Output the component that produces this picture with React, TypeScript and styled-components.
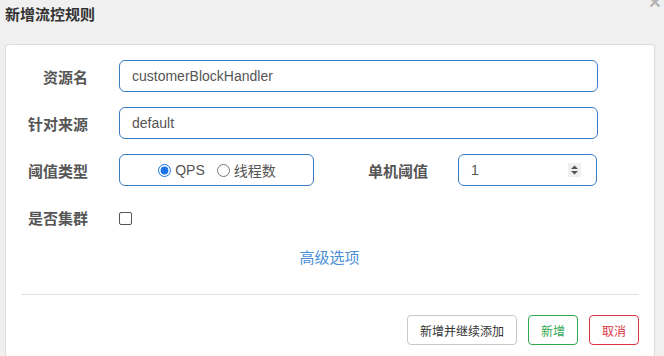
import React from "react";
import styled, { createGlobalStyle } from "styled-components";

const GlobalStyle = createGlobalStyle`
  html, body {
    margin: 0;
    padding: 0;
    background: #f0f0f0;
    font-family: "Liberation Sans", Arial, "Noto Sans CJK SC", sans-serif;
    overflow: hidden;
  }
`;

const Page = styled.div`
  width: 664px;
  height: 356px;
  padding-left: 5px;
  box-sizing: border-box;
`;

const Header = styled.div`
  display: flex;
  align-items: flex-start;
  justify-content: space-between;
  width: 650px;
  height: 44px;
`;

const Title = styled.h4`
  margin: 0;
  padding-top: 4px;
  font-size: 15px;
  line-height: 20px;
  font-weight: bold;
  color: #333;
  font-family: "Noto Sans CJK SC", sans-serif;
`;

const Close = styled.span`
  margin-top: -8px;
  margin-right: -6px;
  font-size: 21px;
  line-height: 20px;
  color: #b5b5b5;
  font-family: "Liberation Sans", Arial, sans-serif;
  font-weight: bold;
`;

const Panel = styled.div`
  width: 650px;
  height: 320px;
  box-sizing: border-box;
  background: #fff;
  border: 1px solid #dcdcdc;
  border-bottom: none;
  border-radius: 4px 4px 0 0;
  padding: 15px 15px 0;
`;

const Row = styled.div`
  display: flex;
  align-items: center;
  height: 32px;
  margin-bottom: 15px;
  padding-right: 41px;
`;

const Label = styled.label<{ $width?: number; $gap?: number }>`
  width: ${(p) => p.$width ?? 67}px;
  margin-right: ${(p) => p.$gap ?? 31}px;
  flex-shrink: 0;
  text-align: right;
  font-family: "Noto Sans CJK SC", sans-serif;
  font-size: 15px;
  font-weight: bold;
  color: #555;
  white-space: nowrap;
`;

const TextInput = styled.input`
  flex: 1;
  height: 32px;
  box-sizing: border-box;
  border: 1px solid #3a7cc2;
  border-radius: 6px;
  padding: 0 12px;
  font-family: "Liberation Sans", Arial, sans-serif;
  font-size: 14px;
  color: #555;
  outline: none;
`;

const RadioBox = styled.div`
  width: 195px;
  height: 32px;
  box-sizing: border-box;
  border: 1px solid #3a7cc2;
  border-radius: 6px;
  display: flex;
  align-items: center;
  justify-content: center;
  gap: 12px;
  padding-left: 1px;
  font-size: 14px;
  color: #555;
`;

const RadioLabel = styled.label`
  display: flex;
  align-items: center;
  gap: 4px;
  font-family: "Liberation Sans", Arial, "Noto Sans CJK SC", sans-serif;

  input {
    margin: 0;
    width: 13px;
    height: 13px;
    accent-color: #1a73e8;
  }
`;

const NumberBox = styled.div`
  width: 139px;
  height: 32px;
  box-sizing: border-box;
  border: 1px solid #3a7cc2;
  border-radius: 6px;
  display: flex;
  align-items: center;
  padding: 0 15px 0 12px;
  font-size: 14px;
  color: #555;
`;

const NumberValue = styled.span`
  flex: 1;
`;

const Spinner = styled.span`
  width: 13px;
  height: 14px;
  background: #efefef;
  display: flex;
  align-items: center;
  justify-content: center;
`;

const Checkbox = styled.span`
  width: 11px;
  height: 11px;
  margin-top: 3px;
  border: 1px solid #555;
  border-radius: 2px;
`;

const LinkRow = styled.div`
  display: flex;
  justify-content: center;
  height: 20px;
  margin-top: -1px;
  padding-right: 1px;
`;

const Link = styled.a`
  font-family: "Noto Sans CJK SC", sans-serif;
  font-size: 15px;
  line-height: 20px;
  color: #4a8fd4;
  text-decoration: none;
`;

const Divider = styled.hr`
  border: none;
  border-top: 1px solid #e2e2e2;
  margin: 27px 0 20px;
`;

const Footer = styled.div`
  display: flex;
  justify-content: flex-end;
  gap: 11px;
`;

const Button = styled.button<{ $tone: "default" | "success" | "danger" }>`
  height: 30px;
  box-sizing: border-box;
  padding: 0 12px;
  background: #fff;
  border-radius: 4px;
  font-family: "Noto Sans CJK SC", sans-serif;
  font-size: 12px;
  border: 1px solid
    ${(p) =>
      p.$tone === "success" ? "#2fa84f" : p.$tone === "danger" ? "#dc3545" : "#c8c8c8"};
  color: ${(p) =>
    p.$tone === "success" ? "#2fa84f" : p.$tone === "danger" ? "#dc3545" : "#333"};
`;

const SpinIcon = () => (
  <svg width="9" height="10" viewBox="0 0 9 10">
    <path d="M4.5 0.5 L8 4 H1 Z" fill="#555" />
    <path d="M1 6 H8 L4.5 9.5 Z" fill="#555" />
  </svg>
);

export default function App() {
  return (
    <Page>
      <GlobalStyle />
      <Header>
        <Title>新增流控规则</Title>
        <Close>×</Close>
      </Header>
      <Panel>
        <Row>
          <Label>资源名</Label>
          <TextInput defaultValue="customerBlockHandler" />
        </Row>
        <Row>
          <Label>针对来源</Label>
          <TextInput defaultValue="default" />
        </Row>
        <Row>
          <Label>阈值类型</Label>
          <RadioBox>
            <RadioLabel>
              <input type="radio" name="grade" defaultChecked />
              QPS
            </RadioLabel>
            <RadioLabel>
              <input type="radio" name="grade" />
              线程数
            </RadioLabel>
          </RadioBox>
          <Label $width={114} $gap={30}>
            单机阈值
          </Label>
          <NumberBox>
            <NumberValue>1</NumberValue>
            <Spinner>
              <SpinIcon />
            </Spinner>
          </NumberBox>
        </Row>
        <Row>
          <Label>是否集群</Label>
          <Checkbox />
        </Row>
        <LinkRow>
          <Link>高级选项</Link>
        </LinkRow>
        <Divider />
        <Footer>
          <Button $tone="default">新增并继续添加</Button>
          <Button $tone="success">新增</Button>
          <Button $tone="danger">取消</Button>
        </Footer>
      </Panel>
    </Page>
  );
}
